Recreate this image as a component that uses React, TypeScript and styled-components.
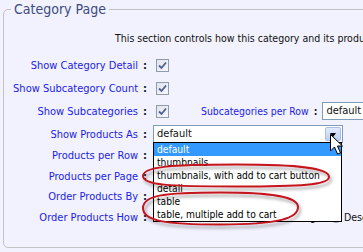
import React from 'react'
import styled, { createGlobalStyle } from 'styled-components'

const GlobalStyle = createGlobalStyle`
	html, body {
		margin: 0;
		padding: 0;
		background: #f1f2fd;
		overflow: hidden;
	}
	body {
		font-family: 'DejaVu Sans Condensed', 'DejaVu Sans', sans-serif;
		font-size: 10.5px;
		color: #111;
	}
`

const displayOptions = [
	'default',
	'thumbnails',
	'thumbnails, with add to cart button',
	'detail',
	'table',
	'table, multiple add to cart',
]

export default function App() {
	return (
		<Page>
			<GlobalStyle />
			<Fieldset>
				<Legend>Category Page</Legend>
				<Intro>This section controls how this category and its products are displayed.</Intro>

				<Form>
					<Row>
						<Label>Show Category Detail<Colon>:</Colon></Label>
						<Value><Checkbox /></Value>
					</Row>
					<Row>
						<Label>Show Subcategory Count<Colon>:</Colon></Label>
						<Value><Checkbox /></Value>
					</Row>
					<Row>
						<Label>Show Subcategories<Colon>:</Colon></Label>
						<Value>
							<Checkbox />
							<SubLabel>Subcategories per Row<Colon>:</Colon></SubLabel>
							<Select width={60}>default</Select>
						</Value>
					</Row>
					<Row>
						<Label>Show Products As<Colon>:</Colon></Label>
						<Value>
							<SelectWrap>
								<Select width={190}>
									default
									<DropButton><Triangle /></DropButton>
								</Select>
								<List>
									{displayOptions.map((opt, i) => (
										<Option key={opt} selected={i === 0}>{opt}</Option>
									))}
								</List>
							</SelectWrap>
						</Value>
					</Row>
					<Row short>
						<Label>Products per Row<Colon>:</Colon></Label>
						<Value><TextInput /></Value>
					</Row>
					<Row short>
						<Label>Products per Page<Colon>:</Colon></Label>
						<Value><TextInput /></Value>
					</Row>
					<Row short>
						<Label>Order Products By<Colon>:</Colon></Label>
						<Value><Select width={120}>Name</Select></Value>
					</Row>
					<Row short>
						<Label>Order Products How<Colon>:</Colon></Label>
						<Value>
							<RadioGroup>
								<Radio /> Ascending
								<Radio /> Descending
							</RadioGroup>
						</Value>
					</Row>
				</Form>
			</Fieldset>

			{/* hand-drawn annotation rings */}
			<Overlay width="363" height="252" viewBox="0 0 363 252">
				<defs>
					<filter id="shade" x="-10%" y="-40%" width="130%" height="190%">
						<feDropShadow dx="2" dy="3" stdDeviation="1.6" floodColor="#000" floodOpacity="0.35" />
					</filter>
				</defs>
				<g fill="none" stroke="#c4121c" strokeWidth="2" filter="url(#shade)">
					<path d="M143,176 C143,167 168,164.5 236,164.5 C300,164.5 329,168 329,177 C329,185 300,186.5 236,186.5 C168,186.5 143,185 143,176 Z" />
					<path d="M143,208 C143,195 165,192.5 220,192.5 C280,192.5 298,198 298,207 C298,218 280,224.5 220,224.5 C165,224.5 143,221 143,208 Z" />
				</g>
			</Overlay>

			<Cursor width="14" height="22" viewBox="0 0 14 22">
				<path d="M0.5,0.5 L0.5,17 L4.5,13 L7.5,20 L10.5,19 L7.5,12 L12.5,12 Z" fill="#fff" stroke="#000" strokeWidth="1" strokeLinejoin="miter" />
			</Cursor>
		</Page>
	)
}

function Checkbox() {
	return (
		<CheckBox>
			<svg width="9" height="9" viewBox="0 0 9 9">
				<path d="M1,4.5 L3.5,7 L8,1.5" fill="none" stroke="#4d5f96" strokeWidth="1.8" />
			</svg>
		</CheckBox>
	)
}

const Page = styled.div`
	position: relative;
	width: 363px;
	height: 252px;
	padding-left: 3px;
	box-sizing: border-box;
	overflow: hidden;
`
const Fieldset = styled.fieldset`
	margin: 0;
	padding: 0;
	width: 460px;
	height: 248px;
	box-sizing: border-box;
	border: 1px solid #c3c3c6;
	border-radius: 5px;
	min-width: 0;
`
const Legend = styled.legend`
	margin-left: 7px;
	padding: 0 3px;
	font-size: 14px;
	line-height: 18px;
	color: #3d4c7e;
`
const Intro = styled.div`
	margin: 13px 0 0 111px;
	line-height: 14px;
	white-space: nowrap;
`
const Form = styled.div`
	margin-top: 8.5px;
	display: flex;
	flex-direction: column;
`
const Row = styled.div<{ short?: boolean }>`
	display: grid;
	grid-template-columns: 143px 1fr;
	column-gap: 6px;
	align-items: center;
	height: ${(p) => (p.short ? '20.5px' : '23px')};
`
const Label = styled.div`
	text-align: right;
	white-space: nowrap;
	font-size: 11px;
	color: #1c1ce6;
`
const Colon = styled.span`
	margin-left: 5px;
	color: #1a1a2a;
	font-weight: bold;
`
const Value = styled.div`
	display: flex;
	align-items: center;
	white-space: nowrap;
`
const SubLabel = styled.span`
	margin: 0 5px 0 32px;
	font-size: 10.4px;
	color: #1c1ce6;
`
const CheckBox = styled.span`
	margin-left: 3px;
	width: 13px;
	height: 13px;
	box-sizing: border-box;
	border: 1px solid #8e9bb1;
	background: linear-gradient(135deg, #e2e4ea, #f6f7f9);
	display: inline-flex;
	align-items: center;
	justify-content: center;
`
const SelectWrap = styled.div`
	position: relative;
	z-index: 2;
`
const Select = styled.div<{ width: number }>`
	position: relative;
	width: ${(p) => p.width}px;
	height: 18px;
	box-sizing: border-box;
	border: 1px solid #7f9db9;
	background: #fff;
	padding-left: 3px;
	font-size: 11px;
	line-height: 16px;
`
const DropButton = styled.span`
	position: absolute;
	top: 1px;
	right: 1px;
	width: 16px;
	height: 14px;
	box-sizing: border-box;
	border: 1px solid #a8bde6;
	border-radius: 2px;
	background: linear-gradient(#e2ebfc, #bccff5);
	display: flex;
	align-items: center;
	justify-content: center;
	padding-top: 2px;
`
const Triangle = styled.span`
	width: 0;
	height: 0;
	border-left: 3.5px solid transparent;
	border-right: 3.5px solid transparent;
	border-top: 4px solid #000;
`
const List = styled.div`
	position: absolute;
	top: 17px;
	left: 0;
	width: 189px;
	box-sizing: border-box;
	border: 1px solid #000;
	background: #fff;
`
const Option = styled.div<{ selected?: boolean }>`
	height: 13px;
	line-height: 13px;
	padding-left: 3px;
	white-space: nowrap;
	font-size: 10.2px;
	background: ${(p) => (p.selected ? '#3399ff' : '#fff')};
	color: ${(p) => (p.selected ? '#fff' : '#000')};
`
const TextInput = styled.span`
	width: 30px;
	height: 16px;
	box-sizing: border-box;
	border: 1px solid #7f9db9;
	background: #fff;
`
const RadioGroup = styled.div`
	display: flex;
	align-items: center;
	margin-left: 86px;
`
const Radio = styled.span`
	width: 12px;
	height: 12px;
	box-sizing: border-box;
	border: 1px solid #9aa3b0;
	border-radius: 50%;
	background: linear-gradient(135deg, #dfe2e8, #fff);
	margin: 0 2px 0 14px;
`
const Overlay = styled.svg`
	position: absolute;
	left: 0;
	top: 0;
	z-index: 3;
	pointer-events: none;
`
const Cursor = styled.svg`
	position: absolute;
	left: 330px;
	top: 134px;
	z-index: 4;
`
